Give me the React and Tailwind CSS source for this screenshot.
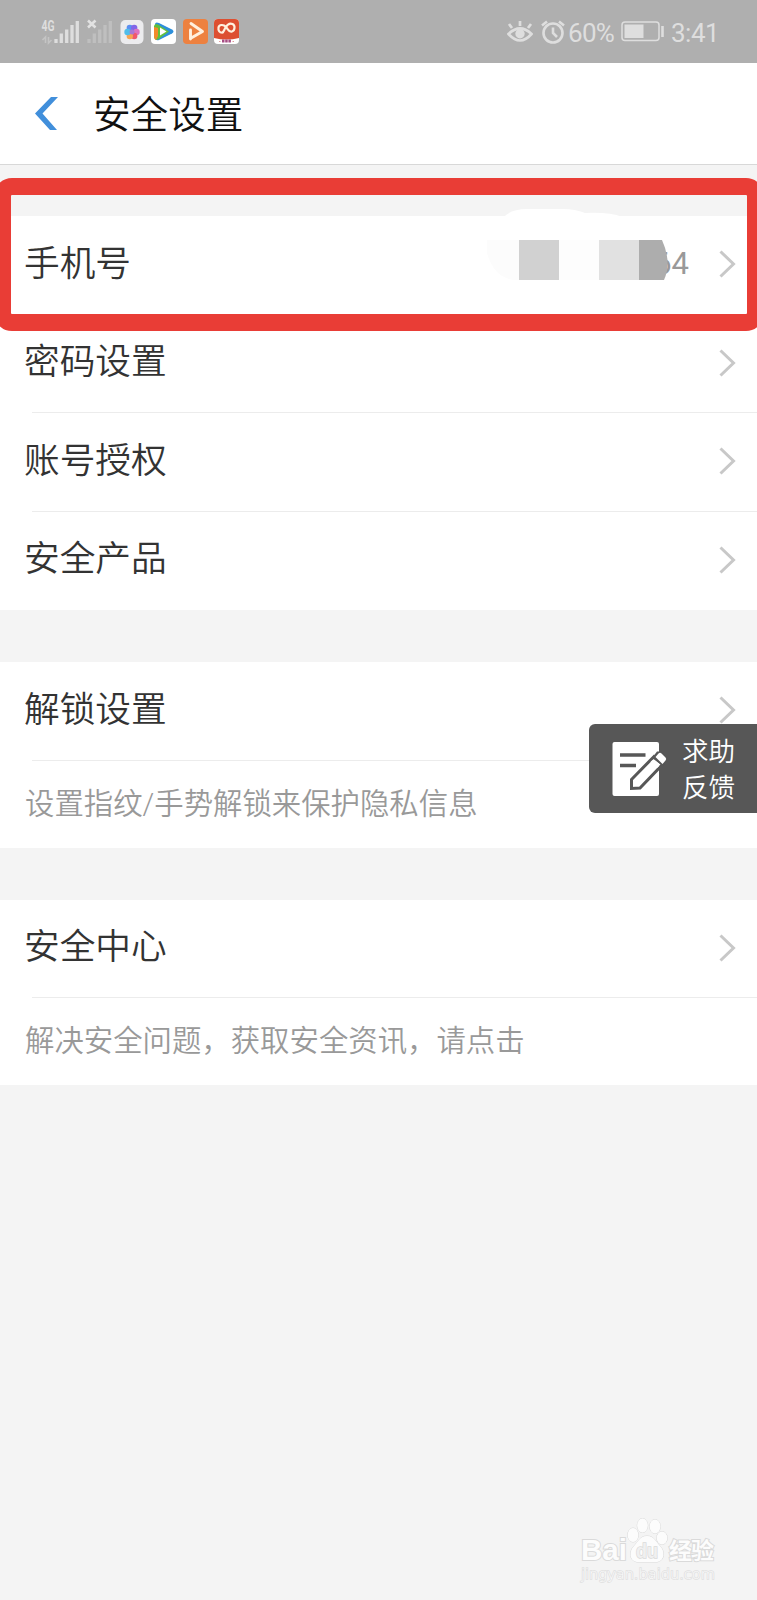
import React from 'react';

const groups = [
  {
    rows: [
      { label: '手机号', phone: true },
      { label: '密码设置' },
      { label: '账号授权' },
      { label: '安全产品' },
    ],
  },
  {
    rows: [{ label: '解锁设置' }],
    hint: '设置指纹/手势解锁来保护隐私信息',
  },
  {
    rows: [{ label: '安全中心' }],
    hint: '解决安全问题，获取安全资讯，请点击',
  },
];

function Signals() {
  return (
    <svg className="w-[72px] h-8" viewBox="41 16 72 32">
      <text x="41.500" y="30.500" textLength="13" lengthAdjust="spacingAndGlyphs" fontSize="14" fontWeight="700" fill="#dedede" fontFamily="Roboto, sans-serif">4G</text>
      <path d="M45.500 43v-6l-3 3M48.500 37v6l3-3" fill="none" stroke="#c4c4c4" strokeWidth="1.600" />
      <path d="M56 43v-4M61.300 43v-9.500M66.700 43v-13.500M72 43v-18M77.300 43V21" stroke="#dedede" strokeWidth="3.300" />
      <path d="M88 20.500l7.500 7M95.500 20.500l-7.500 7" stroke="#e2e2e2" strokeWidth="2.600" />
      <path d="M89 43v-4M94.300 43v-9.500M99.700 43v-13.500M105 43v-18M110.300 43V21" stroke="#bfbfbf" strokeWidth="3.300" />
    </svg>
  );
}

function GalleryIcon() {
  return (
    <svg className="w-6 h-6 ml-[7px]" viewBox="0 0 24 24">
      <rect x=".5" width="23" height="24" rx="5" fill="#ececee" />
      <circle cx="9.800" cy="8" r="3.200" fill="#5b8ff0" />
      <circle cx="14.200" cy="8" r="3.200" fill="#8165e8" />
      <circle cx="16.500" cy="12" r="3.200" fill="#dc73bf" />
      <circle cx="14.200" cy="16" r="3.200" fill="#f0586d" />
      <circle cx="9.800" cy="16" r="3.200" fill="#f7a552" />
      <circle cx="7.500" cy="12" r="3.200" fill="#51bde9" />
      <circle cx="12" cy="12" r="2.500" fill="#a878d4" />
    </svg>
  );
}

function VideoIcon() {
  return (
    <svg className="w-[25px] h-[25px] ml-[7px]" viewBox="0 0 25 25">
      <rect width="25" height="25" rx="4" fill="#fff" />
      <path d="M4 5.500q0-3 4-1.500l13 6.500q3 2 0 4L8 21q-4 1-4-3z" fill="#2d8fdb" />
      <path d="M3 17V7q1-3 4-1.500l11 7-11 8q-4 1-4-3.500" fill="#62bf3c" />
      <path d="M3 8l4 1v8l-2 4q-2-1-2-4z" fill="#f38a2c" />
      <path d="M9 8.500l6.500 4-6.500 4z" fill="#fff" />
    </svg>
  );
}

function PlayerIcon() {
  return (
    <svg className="w-[25px] h-[25px] ml-[7px]" viewBox="0 0 25 25">
      <rect width="25" height="25" rx="4" fill="#ed8140" />
      <path d="M8 4.500l11.500 8L9 18.500M7.500 11v9" fill="none" stroke="#fff0df" strokeWidth="2.900" strokeLinecap="round" strokeLinejoin="round" />
    </svg>
  );
}

function LoopIcon() {
  return (
    <svg className="w-[25px] h-[25px] ml-[6px]" viewBox="0 0 25 25">
      <rect width="25" height="25" rx="4" fill="#fff" />
      <path d="M0 19V4q0-4 4-4h17q4 0 4 4v15q-12.500 3-25 0" fill="#dd4f31" />
      <path d="M9 13.500C5.500 14 4 11.500 4.500 8.500S9.500 5 12 8s3 5.500 6 4.500 3.500-6 .5-7.500-5.500 1-7 3.500-1.500 4-3 5" fill="none" stroke="#fff0df" strokeWidth="2.200" strokeLinecap="round" />
      <path d="M8 22h9" stroke="#a64c83" strokeWidth="3" strokeDasharray="2.500 .7" />
      <path d="M5 22.500h1.500M18.500 22.500H20" stroke="#e29a9a" />
    </svg>
  );
}

function StatusBar() {
  return (
    <div className="h-[63px] bg-[#afafaf] flex items-center pl-[41px] pr-[39px] font-normal text-[#dedede]">
      <Signals />
      <GalleryIcon />
      <VideoIcon />
      <PlayerIcon />
      <LoopIcon />
      <svg className="w-[26px] h-6 ml-auto" viewBox="0 0 26 24" fill="none" stroke="currentColor" strokeWidth="2.700">
        <path d="M1.500 14Q13 3 24.500 14 13 27 1.500 14zM13 6V1M5 8L2 4M21 8L24 4" />
        <circle cx="13" cy="13.800" r="4.700" fill="currentColor" stroke="none" />
      </svg>
      <svg className="w-6 h-6 ml-2" viewBox="0 0 24 24" fill="none" stroke="currentColor" strokeWidth="2.600">
        <circle cx="12" cy="13" r="9.500" />
        <path d="M12 7.500V13l4 4M1 5.500L6 1.500M23 5.500L18 1.500" />
      </svg>
      <span className="ml-[3px] w-[49px] text-[26px] tracking-[-0.7px] leading-none pt-[3px]">60%</span>
      <svg className="w-[44px] h-[21px] ml-1" viewBox="0 0 44 21">
        <rect x="1" y="1" width="37" height="18.500" rx="3" fill="none" stroke="currentColor" strokeWidth="1.500" />
        <rect x="3.500" y="3.500" width="19" height="13.500" fill="currentColor" />
        <path d="M41.500 5v11" stroke="currentColor" strokeWidth="2.600" />
      </svg>
      <span className="ml-[6px] w-[47px] text-[26px] tracking-[-0.5px] leading-none pt-[3px]">3:41</span>
    </div>
  );
}

function Chevron() {
  return (
    <svg className="w-[17px] h-[28px] mb-[2px] shrink-0" viewBox="0 0 17 28">
      <path d="M1.500 1.500L14.500 14 1.500 26.500" fill="none" stroke="#c8c8c8" strokeWidth="3" />
    </svg>
  );
}

// Phone number with all but the last digits pixelated
function MaskedPhone() {
  return (
    <div className="relative flex items-center h-10 ml-auto mr-[30px] mb-[10px] font-normal text-[31px] leading-10 text-[#999]">
      <span className="w-[184px] pt-[7px] text-right">6</span>
      <svg className="absolute left-[-1px] top-[-31px] w-[186px] h-[71px]" viewBox="0 0 186 71">
        <path d="M17 8Q24 0 40 0h36q12 0 22 4 25-1 37 4z" fill="#fff" />
        <path d="M0 31h32v40Q8 72 0 44z" fill="#fcfcfc" />
        <path d="M32 31h40v40H32z" fill="#d1d1d1" />
        <path d="M72 31h40v40H72z" fill="#fdfdfd" />
        <path d="M112 31h40v40h-40z" fill="#e1e1e1" />
        <path d="M152 31h23q10 22 2 40h-25z" fill="#adadad" />
      </svg>
      <span className="pt-[7px]">4</span>
    </div>
  );
}

function Row({ row, last }) {
  return (
    <div className="relative h-[98.500px] flex items-center justify-between pl-6 pr-[21px]">
      <span className="text-[35.700px] leading-[50px] mb-[3px] text-[#333]">{row.label}</span>
      {row.phone && <MaskedPhone />}
      <Chevron />
      {!last && <div className="absolute left-8 right-0 bottom-0 h-px bg-[#ececec]" />}
    </div>
  );
}

function Feedback() {
  return (
    <div className="absolute right-0 top-[724px] w-[168px] h-[89px] rounded-l-[6px] bg-[#575757] flex items-center pl-[23px] text-white">
      <svg className="w-[56px] h-[56px] shrink-0" viewBox="0 0 56 56">
        <rect x="0.500" y="1" width="46.500" height="54" rx="2" fill="#fff" />
        <path d="M8 14h25.500M8 24.500h16" stroke="#575757" strokeWidth="3.500" />
        <path d="M19.500 38.500L42 15.500l8.500 8L28 47l-8.500.5z" fill="#fff" stroke="#575757" strokeWidth="3" />
        <path d="M40 17l5-6.500h4.500l8 9-7 5z" fill="#575757" />
        <path d="M40.500 19l6.500 6-2 2-6.500-6z" fill="#fff" />
        <path d="M43.500 16l3-3.500q1.500-1.500 3 0l4 4q1.500 1.500 0 3L50.500 23z" fill="#fff" />
      </svg>
      <div className="ml-[14px] pt-[3px] text-[26.500px] leading-9">
        <div>求助</div>
        <div>反馈</div>
      </div>
    </div>
  );
}

function Watermark() {
  return (
    <svg className="absolute left-[576px] top-[1514px] w-[150px] h-[72px]" viewBox="0 0 150 72" fill="#fcfcfc" stroke="#dadada" strokeWidth="1" paintOrder="stroke">
      <g fontFamily="'Liberation Sans', 'Noto Sans CJK SC', sans-serif" fontWeight="700">
        <text x="5" y="46" fontSize="30" textLength="46" lengthAdjust="spacingAndGlyphs" strokeWidth="2">Bai</text>
        <ellipse cx="57" cy="21" rx="5.300" ry="7" />
        <ellipse cx="66.500" cy="11.500" rx="5.300" ry="7" />
        <ellipse cx="79" cy="12.500" rx="5.300" ry="7" />
        <ellipse cx="86" cy="24" rx="5.300" ry="6.500" />
        <path d="M71 22c7 0 9 6 13 10 5 5 5 15-3 16H61c-8-1-8-11-3-16 4-4 6-10 13-10z" />
        <text x="60" y="44" fontSize="20" textLength="22" lengthAdjust="spacingAndGlyphs" strokeWidth="1.500" fill="#f0f0f0">du</text>
        <text x="93" y="44.500" fontSize="23" textLength="45" strokeWidth="2">经验</text>
      </g>
      <text x="5" y="65" fontSize="14" textLength="134" lengthAdjust="spacingAndGlyphs" fontFamily="'DejaVu Sans', sans-serif" strokeWidth="1.500" stroke="#e0e0e0">jingyan.baidu.com</text>
    </svg>
  );
}

export default function App() {
  return (
    <div className="relative w-[757px] h-[1600px] overflow-hidden bg-[#f4f4f4] font-[350] font-[Roboto,'Noto_Sans_CJK_SC',sans-serif]">
      <StatusBar />
      <header className="h-[102px] bg-white border-b border-[#d8d8d8] flex items-center pl-[35px]">
        <svg className="w-[23px] h-[33px]" viewBox="0 0 23 33">
          <path d="M16 0h7L7.500 16.500 22 33h-7L0 16.500z" fill="#418fdb" />
        </svg>
        <h1 className="ml-[35px] mt-[2px] text-[37.600px] leading-[54px] font-[350] text-[#111]">安全设置</h1>
      </header>

      <main className="pt-[51px] flex flex-col gap-[52px]">
        {groups.map((group, idx) => (
          <section key={idx} className="bg-white">
            {group.rows.map((row, i) => (
              <Row key={row.label} row={row} last={!group.hint && i === group.rows.length - 1} />
            ))}
            {group.hint && (
              <p className="h-[87px] pl-[25px] text-[29.400px] leading-[87px] text-[#999] whitespace-nowrap">{group.hint}</p>
            )}
          </section>
        ))}
      </main>

      {/* Highlight around the phone number row */}
      <div className="absolute left-[-6px] top-[178px] w-[770px] h-[153px] rounded-[18px] border-[17px] border-[#e93d36]" />
      <Feedback />
      <Watermark />
    </div>
  );
}
